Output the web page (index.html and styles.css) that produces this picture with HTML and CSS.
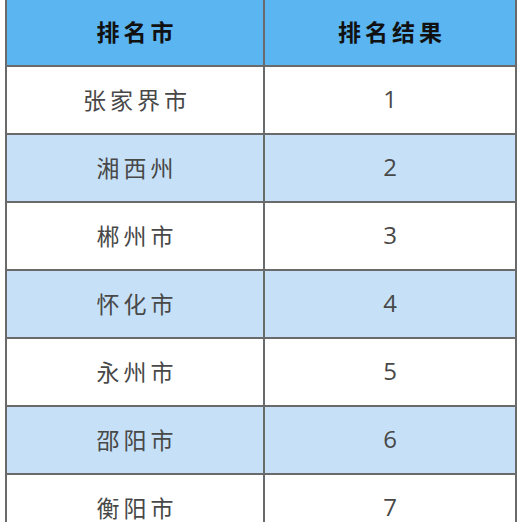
FILE: index.html
```html
<!DOCTYPE html>
<html lang="zh">
<head>
<meta charset="utf-8">
<link rel="stylesheet" href="styles.css">
</head>
<body>
<table class="rank">
  <colgroup><col class="c1"><col class="c2"></colgroup>
  <thead>
    <tr><th>排名市</th><th>排名结果</th></tr>
  </thead>
  <tbody>
    <tr><td>张家界市</td><td class="num">1</td></tr>
    <tr class="alt"><td>湘西州</td><td class="num">2</td></tr>
    <tr><td>郴州市</td><td class="num">3</td></tr>
    <tr class="alt"><td>怀化市</td><td class="num">4</td></tr>
    <tr><td>永州市</td><td class="num">5</td></tr>
    <tr class="alt"><td>邵阳市</td><td class="num">6</td></tr>
    <tr><td>衡阳市</td><td class="num">7</td></tr>
  </tbody>
</table>
</body>
</html>
```
FILE: styles.css
```css
html, body {
  margin: 0;
  padding: 0;
  background: #ffffff;
  overflow: hidden;
}
.rank {
  margin-left: 5px;
  width: 512px;
  border-collapse: collapse;
  table-layout: fixed;
  font-family: "Noto Sans CJK SC", "Noto Sans", sans-serif;
}
.rank .c1 { width: 50.6%; }
.rank .c2 { width: 49.4%; }
.rank th, .rank td {
  border: 2px solid #6a6a6a;
  text-align: center;
  padding: 0 0 3px 4px;
  letter-spacing: 4px;
}
.rank th {
  border-top: none;
  background: #5bb5f1;
  color: #111111;
  font-weight: 700;
  font-size: 23px;
  height: 62px;
}
.rank td {
  color: #484848;
  font-size: 23px;
  font-weight: 400;
  height: 63px;
}
.rank td.num {
  font-family: "Open Sans", "Noto Sans", sans-serif;
  font-size: 24px;
  letter-spacing: 0;
  padding-left: 0;
}
.rank tr.alt td {
  background: #c6e1f7;
}
```
